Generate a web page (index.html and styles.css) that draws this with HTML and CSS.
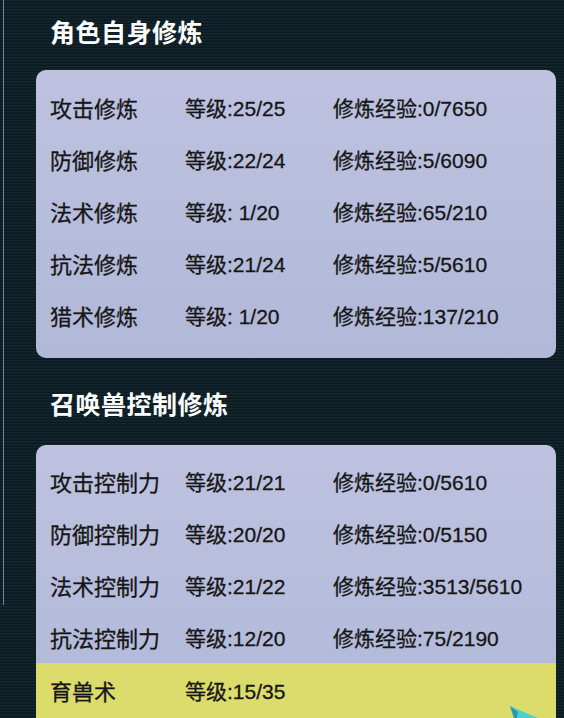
FILE: index.html
```html
<!DOCTYPE html>
<html>

<head>
  <title>修炼</title>

  <link rel="stylesheet" href="styles.css">
</head>

<body>

  <div class = "page">
    <h3 class = "section-title">角色自身修炼</h3>

    <div class = "panel">
      <div class = "row"><span>攻击修炼</span><span>等级:25/25</span><span>修炼经验:0/7650</span></div>
      <div class = "row"><span>防御修炼</span><span>等级:22/24</span><span>修炼经验:5/6090</span></div>
      <div class = "row"><span>法术修炼</span><span>等级: 1/20</span><span>修炼经验:65/210</span></div>
      <div class = "row"><span>抗法修炼</span><span>等级:21/24</span><span>修炼经验:5/5610</span></div>
      <div class = "row"><span>猎术修炼</span><span>等级: 1/20</span><span>修炼经验:137/210</span></div>
    </div>

    <h3 class = "section-title second">召唤兽控制修炼</h3>

    <div class = "panel open">
      <div class = "row"><span>攻击控制力</span><span>等级:21/21</span><span>修炼经验:0/5610</span></div>
      <div class = "row"><span>防御控制力</span><span>等级:20/20</span><span>修炼经验:0/5150</span></div>
      <div class = "row"><span>法术控制力</span><span>等级:21/22</span><span>修炼经验:3513/5610</span></div>
      <div class = "row"><span>抗法控制力</span><span>等级:12/20</span><span>修炼经验:75/2190</span></div>
      <div class = "row selected"><span>育兽术</span><span>等级:15/35</span><span></span></div>
    </div>
  </div>

  <!-- mouse cursor peeking in at the corner -->
  <svg class = "cursor" width = "40" height = "20" viewBox = "0 0 40 20">
    <polygon points = "2,2 30,14 24,20 8,20" fill = "#4fd0d0" />
    <polygon points = "2,2 10,8 8,20" fill = "#2a9aa8" />
  </svg>

</body>

</html>
```

FILE: styles.css
```css
body {
  margin: 0;
  padding: 0;
  height: 718px;
  overflow: hidden;
  font-family: "Liberation Sans", "Noto Sans CJK SC", sans-serif;
  background-color: #0f1f27;
  background-image:
    linear-gradient(#6f8794, #6f8794),
    repeating-linear-gradient(to bottom, #14262e 0px, #14262e 1px, #0b1a21 2px, #0b1a21 3px);
  background-size: 1px 605px, 100% 100%;
  background-position: 3px 0, 0 0;
  background-repeat: no-repeat, repeat;
  position: relative;
}

.page {
  padding-left: 36px;
  width: 520px;
}

.section-title {
  margin: 0;
  padding: 14px 0 0 14px;
  height: 70px;
  box-sizing: border-box;
  color: #ffffff;
  font-size: 25px;
  font-weight: bold;
  letter-spacing: 0.5px;
  font-family: "Noto Sans CJK SC", sans-serif;
  line-height: 34px;
}

.section-title.second {
  height: 87px;
  padding-top: 28px;
}

.panel {
  background: linear-gradient(#bec2e0, #b1b8d8);
  border-radius: 10px;
  padding: 11px 0 17px 0;
}

.panel.open {
  padding-bottom: 0;
  border-radius: 10px 10px 0 0;
  padding-top: 10px;
}

.row {
  display: grid;
  grid-template-columns: 135px 148px 1fr;
  height: 52px;
  align-items: center;
  padding-left: 14px;
  font-size: 21px;
  color: #161616;
  -webkit-text-stroke: 0.3px #161616;
}

.row span:first-child {
  font-size: 22px;
}

.row.selected {
  background-color: #dcdc6c;
  box-sizing: border-box;
  height: 66px;
  padding-bottom: 12px;
}

.cursor {
  position: absolute;
  left: 508px;
  top: 704px;
}
```
